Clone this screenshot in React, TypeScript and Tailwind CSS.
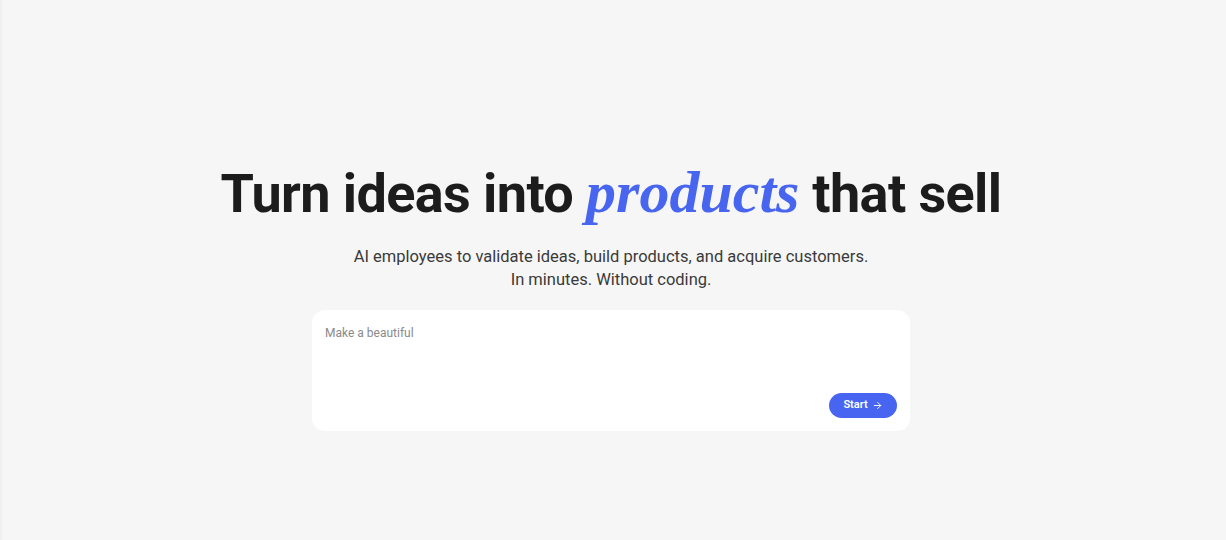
import { ArrowRight } from 'lucide-react';

export default function App() {
  return (
    <div
      className="min-h-[540px] w-full bg-[#f6f6f6] border-l-[2px] border-[#f0f0f0] pr-[6px] flex flex-col items-center pt-[160px]"
      style={{ fontFamily: 'Roboto, "Noto Sans", sans-serif' }}
    >
      <h1 className="text-[54px] leading-[64px] font-bold tracking-[-0.6px] text-[#1c1c1c]">
        Turn ideas into{' '}
        <span
          className="italic font-bold text-[#4765ee] text-[60px] tracking-normal"
          style={{ fontFamily: '"Liberation Serif", serif' }}
        >
          products
        </span>{' '}
        that sell
      </h1>

      <p className="mt-[19px] text-center text-[16.5px] leading-[23px] text-[#3a3a3a]">
        AI employees to validate ideas, build products, and acquire customers.
        <br />
        In minutes. Without coding.
      </p>

      <div className="mt-[19px] w-[598px] h-[121px] bg-white rounded-[13px] flex flex-col px-[13px] pt-[15px] pb-[13px]">
        <div className="text-[12px] leading-[16px] text-[#8a8a8a]">Make a beautiful</div>
        <div className="flex-1" />
        <div className="flex justify-end">
          <button className="h-[25px] w-[68px] rounded-full bg-[#4765f0] text-white text-[11px] font-semibold flex items-center justify-center gap-[4px]">
            Start
            <ArrowRight size={11} strokeWidth={2} />
          </button>
        </div>
      </div>
    </div>
  );
}
